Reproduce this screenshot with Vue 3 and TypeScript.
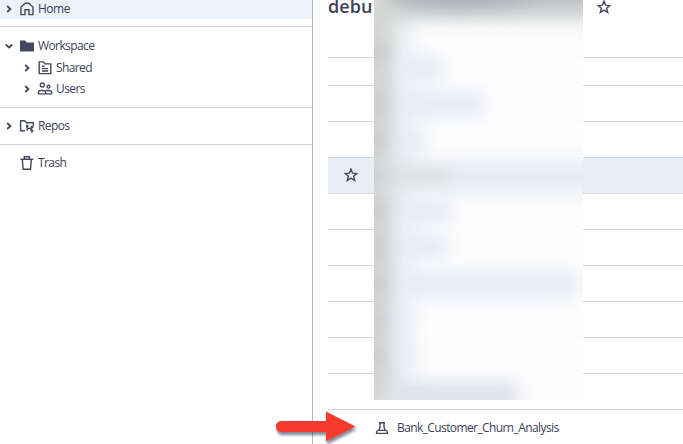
<script setup lang="ts">
interface TreeItem {
  label: string
  icon: 'home' | 'folder' | 'shared' | 'users' | 'repos' | 'trash'
  arrow: 'right' | 'down' | 'none'
  nested?: boolean
  active?: boolean
}

const groups: TreeItem[][] = [
  [{ label: 'Home', icon: 'home', arrow: 'right', active: true }],
  [
    { label: 'Workspace', icon: 'folder', arrow: 'down' },
    { label: 'Shared', icon: 'shared', arrow: 'right', nested: true },
    { label: 'Users', icon: 'users', arrow: 'right', nested: true },
  ],
  [{ label: 'Repos', icon: 'repos', arrow: 'right' }],
  [{ label: 'Trash', icon: 'trash', arrow: 'none' }],
]

const rows = Array.from({ length: 10 }, (_, i) => ({ id: i, selected: i === 3 }))
const starPath = 'M7 1.2 8.6 5.2 12.9 5.5 9.6 8.2 10.7 12.5 7 10.1 3.3 12.5 4.4 8.2 1.1 5.5 5.4 5.2Z'
const smudges = [53, 104, 140, 176, 211, 247, 284, 320, 356]
</script>

<template>
  <div class="page">
    <nav class="sidebar">
      <div v-for="(group, g) in groups" :key="g" class="group">
        <div
          v-for="item in group"
          :key="item.label"
          class="item"
          :class="{ nested: item.nested, active: item.active }"
        >
          <svg class="arrow" viewBox="0 0 8 8">
            <path v-if="item.arrow === 'right'" d="M2.2 1 5.4 4 2.2 7" />
            <path v-if="item.arrow === 'down'" d="M.8 2.5 4 5.5 7.2 2.5" />
          </svg>
          <svg class="icon" viewBox="0 0 16 16">
            <path v-if="item.icon === 'home'" d="M2 13.6V6L6.3 2.3h3.4L14 6v7.6h-4V8.8H6v4.8Z" />
            <path v-if="item.icon === 'folder'" class="solid" d="M1 2.5h5l1.7 2H15V13.5H1Z" />
            <g v-if="item.icon === 'shared'">
              <path d="M2.2 1.9h4.3l1.5 2h5.8v9.7H2.2Z" />
              <path d="M5 6.3h2.5M5 8.6h6.2M5 11h6.2" />
            </g>
            <g v-if="item.icon === 'users'">
              <circle cx="5.3" cy="4" r="2" />
              <circle cx="11.5" cy="5.7" r="1.4" />
              <path d="M1.4 12.9v-1.5q.3-1.9 2.5-1.9h2q2.5 0 2.8 1.9v1.5ZM8.8 9.5h3.2q2.4 0 2.6 1.9v1.5H8.7" />
            </g>
            <g v-if="item.icon === 'repos'">
              <path d="M6 12.7H1.6V2.7h4.2l1.6 2h6.9V8" />
              <path d="M8.2 8v4.8M8.2 10.5h3.2l1.6-1M11.4 10.5l1.6 2.3" />
              <g class="solid">
                <circle cx="8.2" cy="8" r="1.4" />
                <circle cx="13" cy="9.2" r="1.4" />
                <circle cx="13" cy="13" r="1.4" />
              </g>
            </g>
            <path
              v-if="item.icon === 'trash'"
              d="M1.4 4.2h12.8M5.3 4V1.7h5V4M3.3 4.4l.8 9.9h7.4l.8-9.9"
            />
          </svg>
          <span>{{ item.label }}</span>
        </div>
      </div>
    </nav>

    <main class="content">
      <header class="heading">
        <h1>debu</h1>
        <svg class="star" viewBox="0 0 14 14"><path :d="starPath" /></svg>
      </header>

      <div class="list">
        <div v-for="row in rows" :key="row.id" class="row" :class="{ selected: row.selected }">
          <svg v-if="row.selected" class="star" viewBox="0 0 14 14"><path :d="starPath" /></svg>
        </div>
        <div class="row experiment">
          <svg class="flask" viewBox="0 0 14 14">
            <path d="M4 1.7h6M5 2v4.2L3.9 9.2M9 2v4.2l1.1 3M1.6 12.4v-1.2q0-1.8 1.7-1.8h7.4q1.7 0 1.7 1.8v1.2Z" />
          </svg>
          <span>Bank_Customer_Churn_Analysis</span>
        </div>
      </div>
    </main>

    <!-- Frosted cover over the private names -->
    <svg class="cover" viewBox="0 0 209 400" color-interpolation-filters="sRGB">
      <defs>
        <filter id="soft" filterUnits="userSpaceOnUse" x="-60" y="-60" width="330" height="520">
          <feGaussianBlur stdDeviation="8" />
        </filter>
        <filter id="wide" filterUnits="userSpaceOnUse" x="-60" y="-60" width="330" height="520">
          <feGaussianBlur stdDeviation="8" />
        </filter>
      </defs>
      <rect width="209" height="400" fill="#fdfdfe" />
      <g filter="url(#wide)">
        <rect x="5" y="20" width="36" height="400" fill="#eff3f8" />
        <rect x="-40" y="-50" width="300" height="71" fill="#d3d5d6" />
        <rect x="-40" y="-30" width="61" height="440" fill="#d5d7d6" />
        <rect x="0" y="161" width="260" height="31" fill="#e6ebf3" />
        <rect x="0" y="163" width="76" height="26" fill="#dfe2e4" />
      </g>
      <g filter="url(#soft)" fill="#e5ebf5">
        <rect x="26" y="56" width="42" height="26" />
        <rect x="22" y="92" width="88" height="25" />
        <rect x="20" y="129" width="30" height="24" />
        <rect x="20" y="199" width="58" height="25" />
        <rect x="20" y="235" width="53" height="24" />
        <rect x="22" y="272" width="182" height="25" />
        <rect x="14" y="308" width="21" height="22" />
        <rect x="14" y="344" width="24" height="22" />
        <rect x="16" y="381" width="128" height="34" fill="#dde3ea" />
      </g>
      <g filter="url(#wide)">
        <path d="M14-40H240V4Q185-4 150 4 105 11 60 8 25 5 14-4Z" fill="#aab1b7" />
        <ellipse v-for="y in smudges" :key="y" cx="-2" :cy="y" rx="14" ry="10" fill="#c6c9ca" />
      </g>
    </svg>

    <svg class="pointer" viewBox="0 0 84 36">
      <defs>
        <filter id="shade" x="-10%" y="-20%" width="120%" height="150%">
          <feDropShadow dx="1" dy="3" stdDeviation="1.4" flood-color="#39445b" flood-opacity=".65" />
        </filter>
      </defs>
      <path
        filter="url(#shade)"
        fill="#f43b2d"
        d="M7 11H52V1.5L81.5 16.5 52 31.5V22H7Q2 21.5 2 16.5 2 11.5 7 11Z"
      />
    </svg>
  </div>
</template>

<style>
body {
  margin: 0;
  background: #fff;
}
</style>

<style scoped>
.page {
  position: relative;
  display: flex;
  width: 683px;
  height: 444px;
  overflow: hidden;
  background: #fff;
  color: #3c4159;
  font: 12px/22px 'Open Sans', 'Noto Sans', sans-serif;
}
.sidebar {
  box-sizing: border-box;
  width: 313px;
  flex: none;
  border-right: 1px solid #afb6c0;
}
.group {
  box-sizing: border-box;
  height: 37px;
  padding: 7px 0;
  border-bottom: 1px solid #d3d7d8;
}
.group:first-child {
  height: 27px;
  padding: 0 0 8px;
}
.group:nth-child(2) {
  height: 81px;
  padding-top: 8px;
}
.group:last-child {
  border-bottom: 0;
}
.item {
  display: flex;
  align-items: center;
  height: 22px;
  padding-left: 5px;
  letter-spacing: -0.6px;
}
.active {
  height: 19px;
  padding-bottom: 1px;
  box-sizing: border-box;
  letter-spacing: -0.5px;
  background: #edf2f9;
}
.nested {
  padding-left: 23px;
}
.nested:last-child {
  height: 20px;
}
svg {
  display: block;
  flex: none;
  fill: none;
  stroke: #43485e;
  stroke-width: 1.4;
}
.arrow {
  width: 8px;
  height: 8px;
  margin-right: 6px;
  stroke-width: 1.8;
}
.icon {
  width: 16px;
  height: 16px;
  margin-right: 3px;
}
.solid {
  fill: #43485e;
  stroke: none;
}
.content {
  flex: 1;
  padding-left: 15px;
}
.heading {
  display: flex;
  justify-content: space-between;
  height: 57px;
}
h1 {
  margin: -6px 0 0;
  height: 24px;
  font-size: 18px;
  font-weight: 600;
  line-height: 25px;
  letter-spacing: 0.1px;
}
.heading .star {
  margin-right: 72px;
}
.star {
  width: 14px;
  height: 14px;
}
.row {
  box-sizing: border-box;
  display: flex;
  align-items: center;
  height: 36px;
  border-top: 1px solid #d6d8da;
}
.row:first-child {
  height: 28px;
}
.selected {
  background: #e9eef6;
  padding-left: 16px;
}
.selected .star {
  margin-top: -2px;
}
.experiment {
  padding-left: 47px;
  letter-spacing: -0.6px;
}
.flask {
  width: 14px;
  height: 14px;
  margin-right: 8px;
}
.cover {
  position: absolute;
  left: 374px;
  top: 0;
  width: 209px;
  height: 400px;
  overflow: hidden;
  stroke: none;
}
.pointer {
  position: absolute;
  left: 274px;
  top: 410px;
  width: 84px;
  height: 36px;
  stroke: none;
}
</style>
